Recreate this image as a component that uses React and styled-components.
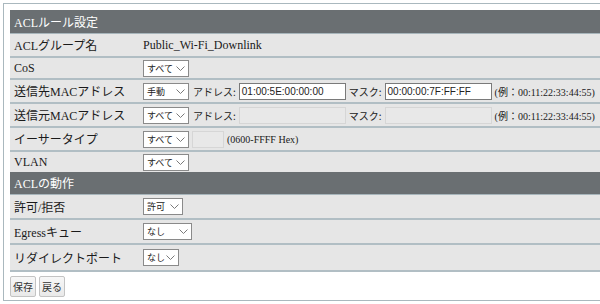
import React from "react";
import styled, { createGlobalStyle } from "styled-components";

const GlobalStyle = createGlobalStyle`
  html, body {
    margin: 0;
    padding: 0;
    background: #fff;
    overflow: hidden;
  }
  body {
    font-family: "Liberation Serif", "Noto Sans CJK JP", serif;
    font-size: 12px;
    color: #1a1a1a;
  }
`;

const Frame = styled.div`
  margin: 3px 0 0 3px;
  width: 640px;
  border: 1px solid #aab8be;
  border-right: none;
  background: #fff;
  padding: 6px 0 0 6px;
`;

const Table = styled.table`
  width: 100%;
  border-collapse: collapse;
  border-spacing: 0;
`;

const HeadCell = styled.td`
  background: #6a6f72;
  color: #fff;
  height: ${(p) => p.h}px;
  padding: 0 4px;
  border-bottom: 1px solid #a7b5bb;
  font-size: 12px;
`;

const Row = styled.tr`
  background: #e6e6e6;
  td {
    height: ${(p) => p.h || 21}px;
    border-bottom: ${(p) => (p.$last ? "none" : "2px solid #b1bec4")};
    padding: 0;
    vertical-align: middle;
  }
`;

const LabelCell = styled.td`
  width: 129px;
  padding-left: 4px !important;
  white-space: nowrap;
`;

const ValueCell = styled.td`
  white-space: nowrap;
`;

const Inline = styled.div`
  display: flex;
  align-items: center;
  gap: 3px;
`;

const Caption = styled.span`
  font-family: "Noto Sans CJK JP", "Liberation Sans", sans-serif;
  font-size: 10px;
  color: #222;
  margin-left: ${(p) => p.$ml || 0}px;
`;

const SelectBox = styled.div`
  box-sizing: border-box;
  display: inline-flex;
  align-items: center;
  justify-content: space-between;
  width: ${(p) => p.w}px;
  height: 17px;
  padding: 0 3px 0 3px;
  border: 1px solid #8a8a8a;
  background: #fff;
  font-family: "Noto Sans CJK JP", sans-serif;
  font-size: 9px;
  color: #222;
  flex: none;
`;

const TextBox = styled.div`
  box-sizing: border-box;
  width: ${(p) => p.w}px;
  height: 17px;
  padding: 0 2px;
  border: 1px solid ${(p) => (p.disabled ? "#d6d6d6" : "#7a7a7a")};
  background: ${(p) => (p.disabled ? "#e8e8e8" : "#fff")};
  font-family: "Liberation Sans", sans-serif;
  font-size: 10px;
  line-height: 15px;
  color: #222;
  flex: none;
`;

const Note = styled.span`
  font-family: "Liberation Serif", "Noto Sans CJK JP", serif;
  font-size: ${(p) => p.$size || 12}px;
`;

const ButtonBar = styled.div`
  display: flex;
  gap: 3px;
  padding: 4px 0 3px 0;
`;

const Button = styled.button`
  height: 21px;
  width: 26px;
  padding: 0;
  border: 1px solid #c3c3c3;
  border-radius: 2px;
  background: linear-gradient(#f7f7f7, #e9e9e9);
  font-family: "Noto Sans CJK JP", sans-serif;
  font-size: 10px;
  color: #333;
`;

const Chevron = () => (
  <svg width="9" height="5" viewBox="0 0 9 5" fill="none">
    <path d="M0.5 0.5 L4.5 4.5 L8.5 0.5" stroke="#7a7a7a" strokeWidth="1" />
  </svg>
);

const Select = ({ w, children }) => (
  <SelectBox w={w}>
    <span>{children}</span>
    <Chevron />
  </SelectBox>
);

const MacRow = ({ label, mode, addr, mask, disabled }) => (
  <Row h={22}>
    <LabelCell>{label}</LabelCell>
    <ValueCell>
      <Inline>
        <Select w={46}>{mode}</Select>
        <Caption $ml={1}>アドレス:</Caption>
        <TextBox w={107} disabled={disabled}>{addr}</TextBox>
        <Caption>マスク:</Caption>
        <TextBox w={107} disabled={disabled}>{mask}</TextBox>
        <Note $size={10}>(例：00:11:22:33:44:55)</Note>
      </Inline>
    </ValueCell>
  </Row>
);

export default function App() {
  return (
    <>
      <GlobalStyle />
      <Frame>
        <Table>
          <tbody>
            <tr>
              <HeadCell colSpan={2} h={23}>ACLルール設定</HeadCell>
            </tr>
            <Row h={22}>
              <LabelCell>ACLグループ名</LabelCell>
              <ValueCell>Public_Wi-Fi_Downlink</ValueCell>
            </Row>
            <Row h={20}>
              <LabelCell>CoS</LabelCell>
              <ValueCell>
                <Select w={46}>すべて</Select>
              </ValueCell>
            </Row>
            <MacRow
              label="送信先MACアドレス"
              mode="手動"
              addr="01:00:5E:00:00:00"
              mask="00:00:00:7F:FF:FF"
            />
            <MacRow label="送信元MACアドレス" mode="すべて" addr="" mask="" disabled />
            <Row h={22}>
              <LabelCell>イーサータイプ</LabelCell>
              <ValueCell>
                <Inline>
                  <Select w={46}>すべて</Select>
                  <TextBox w={32} disabled />
                  <Note $size={10}>(0600-FFFF Hex)</Note>
                </Inline>
              </ValueCell>
            </Row>
            <Row h={20} $last>
              <LabelCell>VLAN</LabelCell>
              <ValueCell>
                <Select w={46}>すべて</Select>
              </ValueCell>
            </Row>
            <tr>
              <HeadCell colSpan={2} h={22}>ACLの動作</HeadCell>
            </tr>
            <Row h={23}>
              <LabelCell>許可/拒否</LabelCell>
              <ValueCell>
                <Select w={40}>許可</Select>
              </ValueCell>
            </Row>
            <Row h={23}>
              <LabelCell>Egressキュー</LabelCell>
              <ValueCell>
                <Select w={49}>なし</Select>
              </ValueCell>
            </Row>
            <Row h={25}>
              <LabelCell>リダイレクトポート</LabelCell>
              <ValueCell>
                <Select w={36}>なし</Select>
              </ValueCell>
            </Row>
          </tbody>
        </Table>
        <ButtonBar>
          <Button>保存</Button>
          <Button>戻る</Button>
        </ButtonBar>
      </Frame>
    </>
  );
}
